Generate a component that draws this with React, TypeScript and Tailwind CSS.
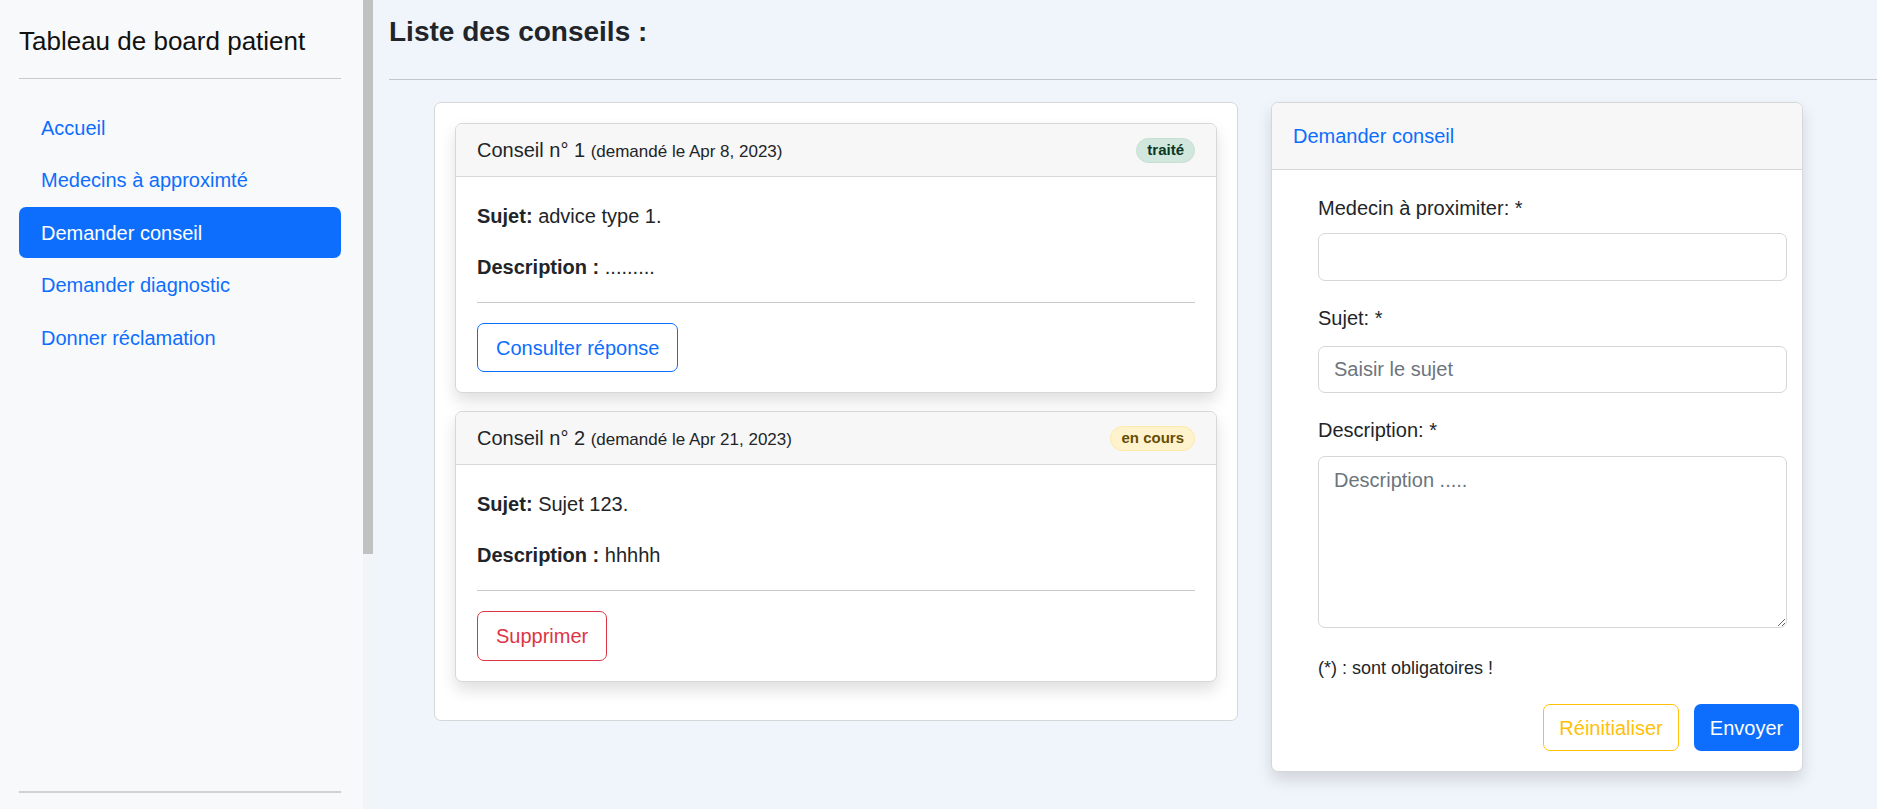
import React from 'react';

const font = { fontFamily: '"Liberation Sans", Arial, sans-serif' };

const navItems = [
  { label: 'Accueil', active: false },
  { label: 'Medecins à approximté', active: false },
  { label: 'Demander conseil', active: true },
  { label: 'Demander diagnostic', active: false },
  { label: 'Donner réclamation', active: false },
];

interface Conseil {
  id: number;
  date: string;
  sujet: string;
  description: string;
  status: 'traité' | 'en cours';
}

const conseils: Conseil[] = [
  { id: 1, date: 'Apr 8, 2023', sujet: 'advice type 1.', description: '.........', status: 'traité' },
  { id: 2, date: 'Apr 21, 2023', sujet: 'Sujet 123.', description: 'hhhhh', status: 'en cours' },
];

function Sidebar() {
  return (
    <div className="flex shrink-0 h-full">
      <aside className="w-[363px] h-full bg-[#f8f9fa] flex flex-col px-[19px] pt-[24px]">
        <div className="text-[26px] leading-[34px] text-[#111]">Tableau de board patient</div>
        <hr className="mt-[20px] border-0 border-t border-[#c9cacc] w-[322px]" />
        <nav className="mt-[23px] flex flex-col gap-[1.5px] w-[322px]">
          {navItems.map(item => (
            <a
              key={item.label}
              href="#"
              className={`h-[51px] flex items-center px-[22px] text-[20px] rounded-[7px] ${item.active ? 'bg-[#0d6efd] text-white' : 'text-[#0d6efd]'}`}
            >
              {item.label}
            </a>
          ))}
        </nav>
        <div className="flex-1" />
        <hr className="mb-[16px] border-0 border-t-2 border-[#d0d1d3] w-[322px]" />
      </aside>
      {/* sidebar scrollbar */}
      <div className="w-[10px] h-full bg-[#f2f5f7] flex flex-col">
        <div className="h-[554px] bg-[#c1c1c1]" />
      </div>
    </div>
  );
}

function Badge({ status }: { status: Conseil['status'] }) {
  const done = status === 'traité';
  return (
    <span
      className={`h-[25px] px-[10px] rounded-full text-[15px] font-bold flex items-center border ${done ? 'bg-[#d1e7dd] text-[#0a3622] border-[#c6e0d4]' : 'bg-[#fff3cd] text-[#664d03] border-[#ffe9a8]'}`}
    >
      {status}
    </span>
  );
}

function ConseilCard({ c }: { c: Conseil }) {
  return (
    <div className="bg-white border border-[#d6d7d8] rounded-[7px] shadow-[0_8px_16px_rgba(0,0,0,0.13)] overflow-hidden">
      <div className="h-[53px] bg-[#f7f7f7] border-b border-[#d6d7d8] flex items-center justify-between px-[21px]">
        <div className="text-[20px] text-[#212529]">
          Conseil n° {c.id} <span className="text-[17px]">(demandé le {c.date})</span>
        </div>
        <Badge status={c.status} />
      </div>
      <div className="px-[21px] pt-[24px] pb-[20px] text-[20px] text-[#212529]">
        <p className="leading-[30px]"><span className="font-bold">Sujet:</span> {c.sujet}</p>
        <p className="leading-[30px] mt-[21px]"><span className="font-bold">Description :</span> {c.description}</p>
        <hr className="mt-[20px] border-0 border-t border-[#c8c9ca]" />
        <div className="mt-[20px]">
          {c.status === 'traité' ? (
            <button className="h-[49px] px-[18px] rounded-[7px] border border-[#0d6efd] text-[#0d6efd] text-[20px]">
              Consulter réponse
            </button>
          ) : (
            <button className="h-[50px] px-[18px] rounded-[7px] border border-[#dc3545] text-[#dc3545] text-[20px]">
              Supprimer
            </button>
          )}
        </div>
      </div>
    </div>
  );
}

function DemandeForm() {
  return (
    <div className="w-[532px] bg-white border border-[#d6d7d8] rounded-[7px] shadow-[0_8px_16px_rgba(0,0,0,0.13)] overflow-hidden">
      <div className="h-[67px] bg-[#f7f7f7] border-b border-[#d6d7d8] flex items-center px-[21px]">
        <span className="text-[20px] text-[#0d6efd]">Demander conseil</span>
      </div>
      <div className="pl-[46px] pr-[3px] pt-[23px] pb-[20px] text-[20px] text-[#212529]">
        <label className="block leading-[30px]">Medecin à proximiter: *</label>
        <input
          className="mt-[10px] w-[469px] h-[48px] border border-[#d4d6d9] rounded-[7px] px-[15px] text-[20px] outline-none"
          style={font}
        />
        <label className="block leading-[30px] mt-[22px]">Sujet: *</label>
        <input
          placeholder="Saisir le sujet"
          className="mt-[13px] w-[469px] h-[47px] border border-[#d4d6d9] rounded-[7px] px-[15px] text-[20px] outline-none placeholder:text-[#6c757d]"
          style={font}
        />
        <label className="block leading-[30px] mt-[22px]">Description: *</label>
        <textarea
          placeholder="Description ....."
          className="mt-[11px] block w-[469px] h-[172px] border border-[#d4d6d9] rounded-[7px] px-[15px] py-[8px] text-[20px] outline-none placeholder:text-[#6c757d]"
          style={font}
        />
        <p className="mt-[27px] text-[18px] leading-[26px]">(*) : sont obligatoires !</p>
        <div className="mt-[23px] flex justify-end gap-[15px]">
          <button className="h-[47px] w-[136px] rounded-[7px] border border-[#ffc107] text-[#ffc107] text-[20px]">
            Réinitialiser
          </button>
          <button className="h-[47px] w-[105px] rounded-[7px] bg-[#0d6efd] text-white text-[20px]">
            Envoyer
          </button>
        </div>
      </div>
    </div>
  );
}

export default function App() {
  return (
    <div className="flex w-full h-[809px] overflow-hidden bg-[#f0f4fb]" style={font}>
      <Sidebar />
      <main className="flex-1 flex flex-col pl-[16px]">
        <h4 className="mt-[14px] text-[28px] leading-[36px] font-bold text-[#212529]">Liste des conseils :</h4>
        <hr className="mt-[29px] border-0 border-t border-[#c4c6ca]" />
        <div className="mt-[22px] ml-[45px] flex items-start gap-[33px]">
          <div className="w-[804px] bg-white border border-[#d6d7d8] rounded-[7px] p-[20px] pb-[38px] flex flex-col gap-[18px]">
            {conseils.map(c => (
              <ConseilCard key={c.id} c={c} />
            ))}
          </div>
          <DemandeForm />
        </div>
      </main>
    </div>
  );
}
